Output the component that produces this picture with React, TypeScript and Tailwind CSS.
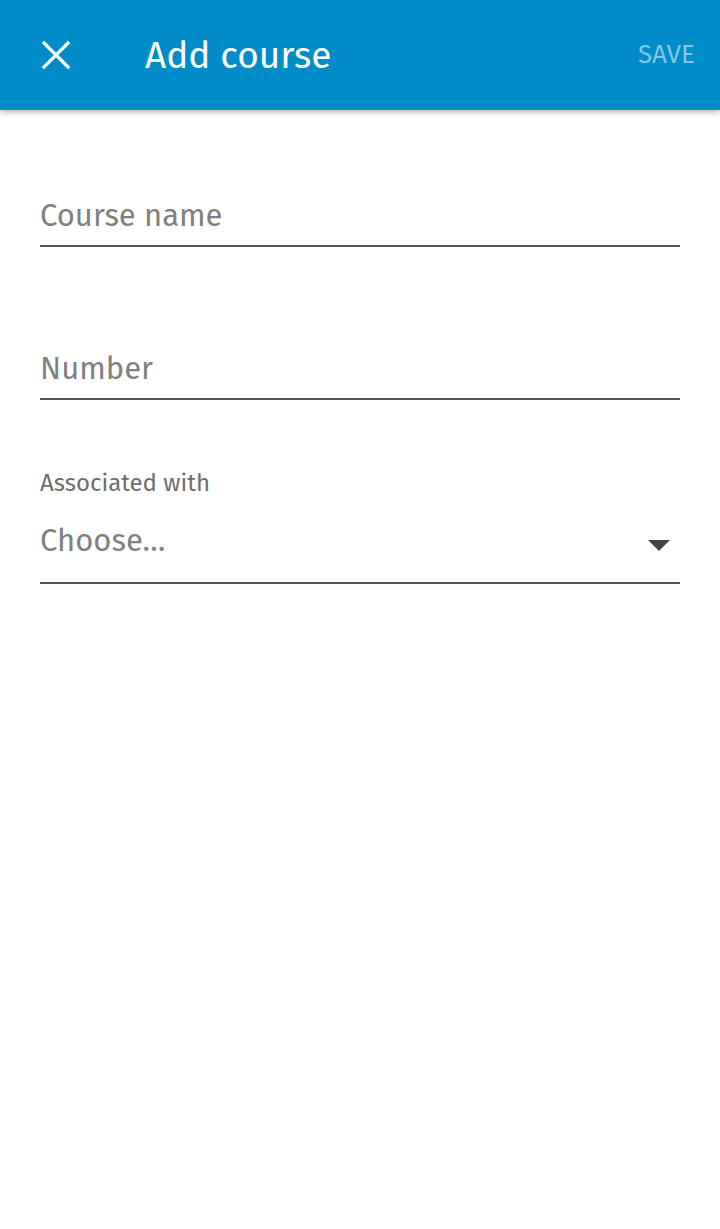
import React from "react";

const Field = ({ placeholder }: { placeholder: string }) => (
  <div className="border-b-2 border-[#555555] pb-[9px]">
    <div className="text-[31px] leading-[40px] text-[#808080]">{placeholder}</div>
  </div>
);

export default function App() {
  return (
    <div className="min-h-[1229px] bg-white font-['Fira_Sans','Noto_Sans',sans-serif]">
      <header className="h-[110px] bg-[#008cc9] flex items-center shadow-[0_2px_6px_rgba(0,0,0,0.3)] relative">
        <button className="w-[112px] h-full flex items-center justify-center">
          <svg width="30" height="30" viewBox="0 0 30 30">
            <path d="M3 3 L27 27 M27 3 L3 27" stroke="white" strokeWidth="3.2" strokeLinecap="square" />
          </svg>
        </button>
        <h1 className="ml-[33px] text-[37px] text-white leading-none">Add course</h1>
        <span className="ml-auto mr-[25px] text-[26px] text-[#80c6e5] leading-none">SAVE</span>
      </header>

      <main className="px-[40px] pt-[86px]">
        <Field placeholder="Course name" />
        <div className="mt-[102px]">
          <Field placeholder="Number" />
        </div>
        <div className="mt-[67px]">
          <div className="text-[24px] leading-[32px] text-[#6e6e6e]">Associated with</div>
          <div className="mt-[22px] border-b-2 border-[#555555] pb-[21px] flex items-center justify-between">
            <span className="text-[31px] leading-[40px] text-[#808080]">Choose…</span>
            <svg width="22" height="12" viewBox="0 0 22 12" className="mr-[10px] mt-[10px]">
              <path d="M0 0 L22 0 L11 11 Z" fill="#444444" />
            </svg>
          </div>
        </div>
      </main>
    </div>
  );
}
